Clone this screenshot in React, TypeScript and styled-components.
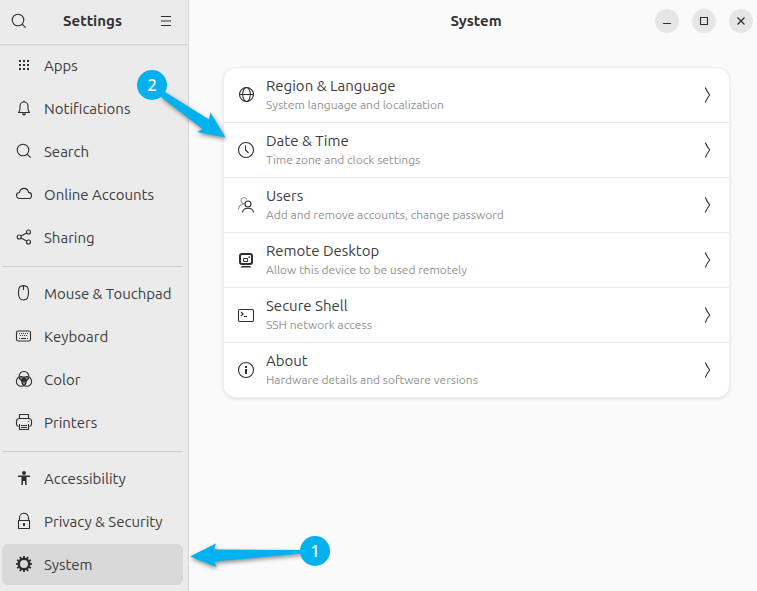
import React from "react";
import styled, { createGlobalStyle } from "styled-components";

const GlobalStyle = createGlobalStyle`
  *, *::before, *::after { box-sizing: border-box; }
  body {
    margin: 0;
    background: #fafafa;
    color: #3d3d3d;
    font-family: Ubuntu, "Noto Sans", "Open Sans", sans-serif;
    font-size: 15px;
  }
  button { font: inherit; color: inherit; border: 0; background: none; padding: 0; }
  h1, p { margin: 0; }
  ul { margin: 0; padding: 0; list-style: none; }
`;

const Window = styled.div`
  position: relative;
  display: grid;
  grid-template-columns: 189px 1fr;
  min-height: 100vh;
`;

const Sidebar = styled.aside`
  background: #ebebeb;
  border-right: 1px solid #d6d6d6;
`;

const SidebarHeader = styled.header`
  display: flex;
  align-items: center;
  justify-content: space-between;
  height: 45px;
  padding: 0 5px 2px 2px;
  border-bottom: 1px solid #d4d4d4;
  box-shadow: 0 1px 1px #e3e3e3;
`;

const Title = styled.h1`
  font-size: 15px;
  line-height: 20px;
  font-weight: 700;
  color: #333;
  text-align: center;
`;

const HeaderButton = styled.button`
  display: flex;
  align-items: center;
  justify-content: center;
  width: 34px;
  height: 34px;
  border-radius: 6px;
`;

const NavGroup = styled.ul`
  display: flex;
  flex-direction: column;
  gap: 2px;
  margin: 0 5px 0 2px;
  & + & {
    margin-top: 8px;
    padding-top: 6px;
    border-top: 1px solid #cdcdcd;
  }
`;

const NavButton = styled.button<{ $selected?: boolean }>`
  display: flex;
  align-items: center;
  gap: 12px;
  width: 100%;
  height: 41px;
  padding: 0 8px 1px 14px;
  border-radius: 6px;
  text-align: left;
  white-space: nowrap;
  background: ${(p) => (p.$selected ? "#d9d9d9" : "transparent")};
`;

const NavLabel = styled.span`
  padding-top: 2px;
  line-height: 20px;
`;

const Glyph = styled.svg`
  display: block;
  flex: none;
  width: 16px;
  height: 16px;
  overflow: visible;
  color: #2e2e2e;
`;

const Main = styled.main`
  min-width: 0;
`;

const MainHeader = styled.header`
  display: grid;
  grid-template-columns: 1fr auto 1fr;
  align-items: center;
  height: 44px;
  padding: 0 4px 2px 10px;
`;

const WindowControls = styled.div`
  grid-column: 3;
  display: flex;
  justify-content: flex-end;
  gap: 13px;
`;

const WindowButton = styled.button`
  display: flex;
  align-items: center;
  justify-content: center;
  width: 24px;
  height: 24px;
  border-radius: 50%;
  background: #e6e6e6;
`;

const CenterTitle = styled(Title)`
  grid-column: 2;
`;

const Card = styled.ul`
  margin: 24px 28px 24px 35px;
  border-radius: 12px;
  overflow: hidden;
  background: #fff;
  box-shadow: 0 0 0 1px #f0f0f0, 0 1px 3px 1px rgba(0, 0, 0, 0.12);
`;

const CardItem = styled.li`
  & + & { border-top: 1px solid #e9e9e9; }
`;

const CardButton = styled.button`
  display: flex;
  align-items: center;
  gap: 12px;
  width: 100%;
  height: 54px;
  padding: 0 14px;
  text-align: left;
`;

const RowText = styled.span`
  flex: 1;
  min-width: 0;
`;

const RowTitle = styled.span`
  display: block;
  line-height: 20px;
`;

const RowSubtitle = styled.span`
  display: block;
  font-size: 12px;
  line-height: 18px;
  color: #929292;
`;

const Callout = styled.div<{ $left: number; $top: number }>`
  position: absolute;
  left: ${(p) => p.$left}px;
  top: ${(p) => p.$top}px;
  width: 30px;
  height: 30px;
  pointer-events: none;
`;

const CalloutArrow = styled.svg`
  position: absolute;
  left: 0;
  top: 0;
  width: 30px;
  height: 30px;
  overflow: visible;
  filter: drop-shadow(1px 2px 2px rgba(0, 0, 0, 0.45));
`;

const CalloutNumber = styled.span`
  position: relative;
  display: block;
  border-radius: 50%;
  background: #03b1ee;
  color: #fff;
  font: 500 16px/30px "Noto Sans", sans-serif;
  text-align: center;
`;

type IconName =
  | "search" | "menu" | "apps" | "bell" | "cloud" | "share" | "mouse" | "keyboard"
  | "color" | "printer" | "accessibility" | "lock" | "gear" | "globe" | "clock"
  | "users" | "remote" | "terminal" | "info" | "chevron" | "minimize" | "maximize" | "close";

const dots = (xs: number[], ys: number[], size: number) =>
  ys.flatMap((y) => xs.map((x) => `M${x} ${y}h${size}v${size}h-${size}z`)).join("");

const gearTeeth = Array.from({ length: 12 }, (_, i) => i * 30);

const line = { fill: "none", stroke: "currentColor", strokeWidth: 1.1 };

const shapes: Record<IconName, React.ReactNode> = {
  search: (
    <g {...line}>
      <circle cx="7" cy="7" r="5.8" />
      <path d="M11.1 11.1 14.6 14.6" />
    </g>
  ),
  menu: <path fill="currentColor" d="M3 3h10v1H3zM3 7.5h10v1H3zM3 12h10v1H3z" />,
  apps: <path fill="currentColor" d={dots([3, 7, 11], [3, 7, 11], 2)} />,
  bell: (
    <>
      <path {...line} d="M2 12.500h12M2.600 12.300C3.800 11.200 4 10 4 8.500V6a4 4 0 0 1 8 0v2.500c0 1.500.2 2.700 1.400 3.800M8 2V.5" />
      <path fill="currentColor" d="M6 13.500h4c0 1.200-.8 2-2 2s-2-.8-2-2z" />
    </>
  ),
  cloud: <path {...line} d="M3.600 12.500a3 3 0 0 1-.2-6C4 3.900 5.800 2.400 8 2.400c2.300 0 4 1.500 4.600 4 1.800.1 2.900 1.400 2.900 3s-1.200 3.100-3 3.100z" />,
  share: (
    <g {...line}>
      <circle cx="3.200" cy="8" r="2" />
      <circle cx="12.500" cy="3" r="2" />
      <circle cx="12.500" cy="13" r="2" />
      <path d="M5 7.100 10.700 4M5 8.900l5.700 3.200" />
    </g>
  ),
  mouse: <path {...line} d="M4.300 1.400Q7.500-.2 10.700 1.400C11.900 2 12.500 5 12.500 8c0 4.500-1.500 7-5 7s-5-2.500-5-7c0-3 .6-6 1.800-6.600zM7.500.5V5" />,
  keyboard: (
    <>
      <rect {...line} x=".5" y="3" width="14" height="10" rx="1.800" />
      <path fill="currentColor" d={dots([3, 5, 7, 9, 11], [5], 1) + dots([4, 6, 8, 10], [7], 1) + "M3 10h1v1H3zM5 10h5v1H5zM11 10h1v1h-1z"} />
    </>
  ),
  color: (
    <>
      <g {...line}>
        <circle cx="8" cy="5.400" r="4.900" />
        <circle cx="5.300" cy="10.400" r="4.900" />
        <circle cx="10.700" cy="10.400" r="4.900" />
      </g>
      <path fill="currentColor" fillOpacity=".6" d="M3.300 6c1.600-.9 3.300-.7 4.700.2 1.400-.9 3.100-1.100 4.700-.2-.2 1.800-1 3-2.200 3.800 0 1.900-.9 3.500-2.500 4.700-1.600-1.200-2.500-2.800-2.500-4.700-1.200-.8-2-2-2.200-3.800z" />
      <path fill="currentColor" d="M8 6.200c1.400 1 2.300 2.200 2.500 3.700-1.600.7-3.400.7-5 0 .2-1.500 1.100-2.700 2.500-3.700z" />
    </>
  ),
  printer: (
    <>
      <path {...line} d="M3.500 4V.5h9V4M2.500 12.500C1.200 12.300.5 11.500.5 10V7.500C.5 5.600 1.600 4.500 3.500 4.500h9c1.900 0 3 1.100 3 3V10c0 1.500-.7 2.300-2 2.500M3.500 10v5.500h9V10" />
      <path fill="currentColor" d="M5 11h6v1H5zM5 13h6v1H5zM12 7h1v1h-1z" />
    </>
  ),
  accessibility: (
    <path fill="currentColor" d="M8 1a2 2 0 1 1 0 4 2 2 0 0 1 0-4zM2 5.500h12V7h-3.500v8H9v-4H7v4H5.500V7H2z" />
  ),
  lock: (
    <>
      <path {...line} d="M2.500 7.500h11v8h-11zM3.500 7V4.800a4.500 4.500 0 0 1 9 0V7" />
      <path fill="currentColor" d="M7 10h2v3H7z" />
    </>
  ),
  gear: (
    <>
      <circle cx="8" cy="8" r="5.200" fill="none" stroke="currentColor" strokeWidth="2.500" />
      {gearTeeth.map((angle) => (
        <path key={angle} fill="currentColor" d="M7.100 0h1.800v2.600H7.100z" transform={`rotate(${angle} 8 8)`} />
      ))}
    </>
  ),
  globe: (
    <g {...line}>
      <circle cx="8.500" cy="7.500" r="7" />
      <ellipse cx="8.500" cy="7.500" rx="3.800" ry="7" />
      <path d="M1.500 7.500h14" />
    </g>
  ),
  clock: (
    <g {...line}>
      <circle cx="8" cy="8" r="7.500" />
      <path d="M7.500 3.500V8l3 3" />
    </g>
  ),
  users: (
    <g {...line}>
      <g opacity=".5">
        <path d="M7.300 6.300A3 3 0 1 1 8.700 2.200M.5 12.500c.2-3 1.700-4.900 4.800-5.400" />
      </g>
      <circle cx="10" cy="7" r="3" />
      <path d="M4.500 15.500c.3-2.900 2.300-4.200 5.500-4.200s5.200 1.300 5.500 4.200" />
    </g>
  ),
  remote: (
    <>
      <rect x="2" y="2" width="12" height="10" rx="2" fill="none" stroke="currentColor" strokeWidth="2" />
      <path fill="none" stroke="currentColor" d="M5.500 6.500h4v3h-4z" />
      <path fill="currentColor" d="M10.500 4.500H12V6h-1.500zM4 14h8l1.500 1.500h-11z" />
    </>
  ),
  terminal: (
    <g {...line}>
      <rect x=".5" y="2.500" width="15" height="12" rx="1.500" />
      <path d="M3 5 5.200 7 3 9M6 9.500h3" />
    </g>
  ),
  info: (
    <>
      <circle {...line} cx="8" cy="8" r="7.500" />
      <path fill="currentColor" d="M7 4h2v2H7zM7 7h2v5H7z" />
    </>
  ),
  chevron: <path {...line} d="M6.300.5C7.500 3.500 9 6 10.700 8 9 10 7.500 12.500 6.300 15.500" />,
  minimize: <path fill="currentColor" d="M4 10h8v1H4z" />,
  maximize: <path {...line} d="M4.500 4.500h7v7h-7z" />,
  close: <path {...line} strokeWidth="1.300" d="m4.500 4.500 7 7M11.500 4.500l-7 7" />,
};

const Icon = ({ name }: { name: IconName }) => (
  <Glyph viewBox="0 0 16 16" aria-hidden="true">{shapes[name]}</Glyph>
);

const groups: { icon: IconName; label: string }[][] = [
  [
    { icon: "apps", label: "Apps" },
    { icon: "bell", label: "Notifications" },
    { icon: "search", label: "Search" },
    { icon: "cloud", label: "Online Accounts" },
    { icon: "share", label: "Sharing" },
  ],
  [
    { icon: "mouse", label: "Mouse & Touchpad" },
    { icon: "keyboard", label: "Keyboard" },
    { icon: "color", label: "Color" },
    { icon: "printer", label: "Printers" },
  ],
  [
    { icon: "accessibility", label: "Accessibility" },
    { icon: "lock", label: "Privacy & Security" },
    { icon: "gear", label: "System" },
  ],
];

const rows: { icon: IconName; title: string; subtitle: string }[] = [
  { icon: "globe", title: "Region & Language", subtitle: "System language and localization" },
  { icon: "clock", title: "Date & Time", subtitle: "Time zone and clock settings" },
  { icon: "users", title: "Users", subtitle: "Add and remove accounts, change password" },
  { icon: "remote", title: "Remote Desktop", subtitle: "Allow this device to be used remotely" },
  { icon: "terminal", title: "Secure Shell", subtitle: "SSH network access" },
  { icon: "info", title: "About", subtitle: "Hardware details and software versions" },
];

export default function App() {
  const selected = "System";
  return (
    <>
      <GlobalStyle />
      <Window>
        <Sidebar>
          <SidebarHeader>
            <HeaderButton aria-label="Search settings"><Icon name="search" /></HeaderButton>
            <Title>Settings</Title>
            <HeaderButton aria-label="Main menu"><Icon name="menu" /></HeaderButton>
          </SidebarHeader>
          <nav aria-label="Settings panels">
            {groups.map((group) => (
              <NavGroup key={group[0].label}>
                {group.map(({ icon, label }) => (
                  <li key={label}>
                    <NavButton
                      $selected={label === selected}
                      aria-current={label === selected ? "page" : undefined}
                    >
                      <Icon name={icon} />
                      <NavLabel>{label}</NavLabel>
                    </NavButton>
                  </li>
                ))}
              </NavGroup>
            ))}
          </nav>
        </Sidebar>
        <Main>
          <MainHeader>
            <CenterTitle>System</CenterTitle>
            <WindowControls>
              <WindowButton aria-label="Minimize"><Icon name="minimize" /></WindowButton>
              <WindowButton aria-label="Maximize"><Icon name="maximize" /></WindowButton>
              <WindowButton aria-label="Close"><Icon name="close" /></WindowButton>
            </WindowControls>
          </MainHeader>
          <Card>
            {rows.map(({ icon, title, subtitle }) => (
              <CardItem key={title}>
                <CardButton>
                  <Icon name={icon} />
                  <RowText>
                    <RowTitle>{title}</RowTitle>
                    <RowSubtitle>{subtitle}</RowSubtitle>
                  </RowText>
                  <Icon name="chevron" />
                </CardButton>
              </CardItem>
            ))}
          </Card>
        </Main>
        <Callout $left={137} $top={70}>
          <CalloutArrow viewBox="0 0 30 30" aria-hidden="true">
            <path fill="#03b1ee" d="M28 22 72 49.500 73.500 42.500 88.500 67.500 60 62 65.500 59 24 27z" />
          </CalloutArrow>
          <CalloutNumber>2</CalloutNumber>
        </Callout>
        <Callout $left={300} $top={536}>
          <CalloutArrow viewBox="0 0 30 30" aria-hidden="true">
            <path fill="#03b1ee" d="M2 14-86 13.500-84 7.500-110 20.500-83.500 31-86 25.500 2 17.500z" />
          </CalloutArrow>
          <CalloutNumber>1</CalloutNumber>
        </Callout>
      </Window>
    </>
  );
}
